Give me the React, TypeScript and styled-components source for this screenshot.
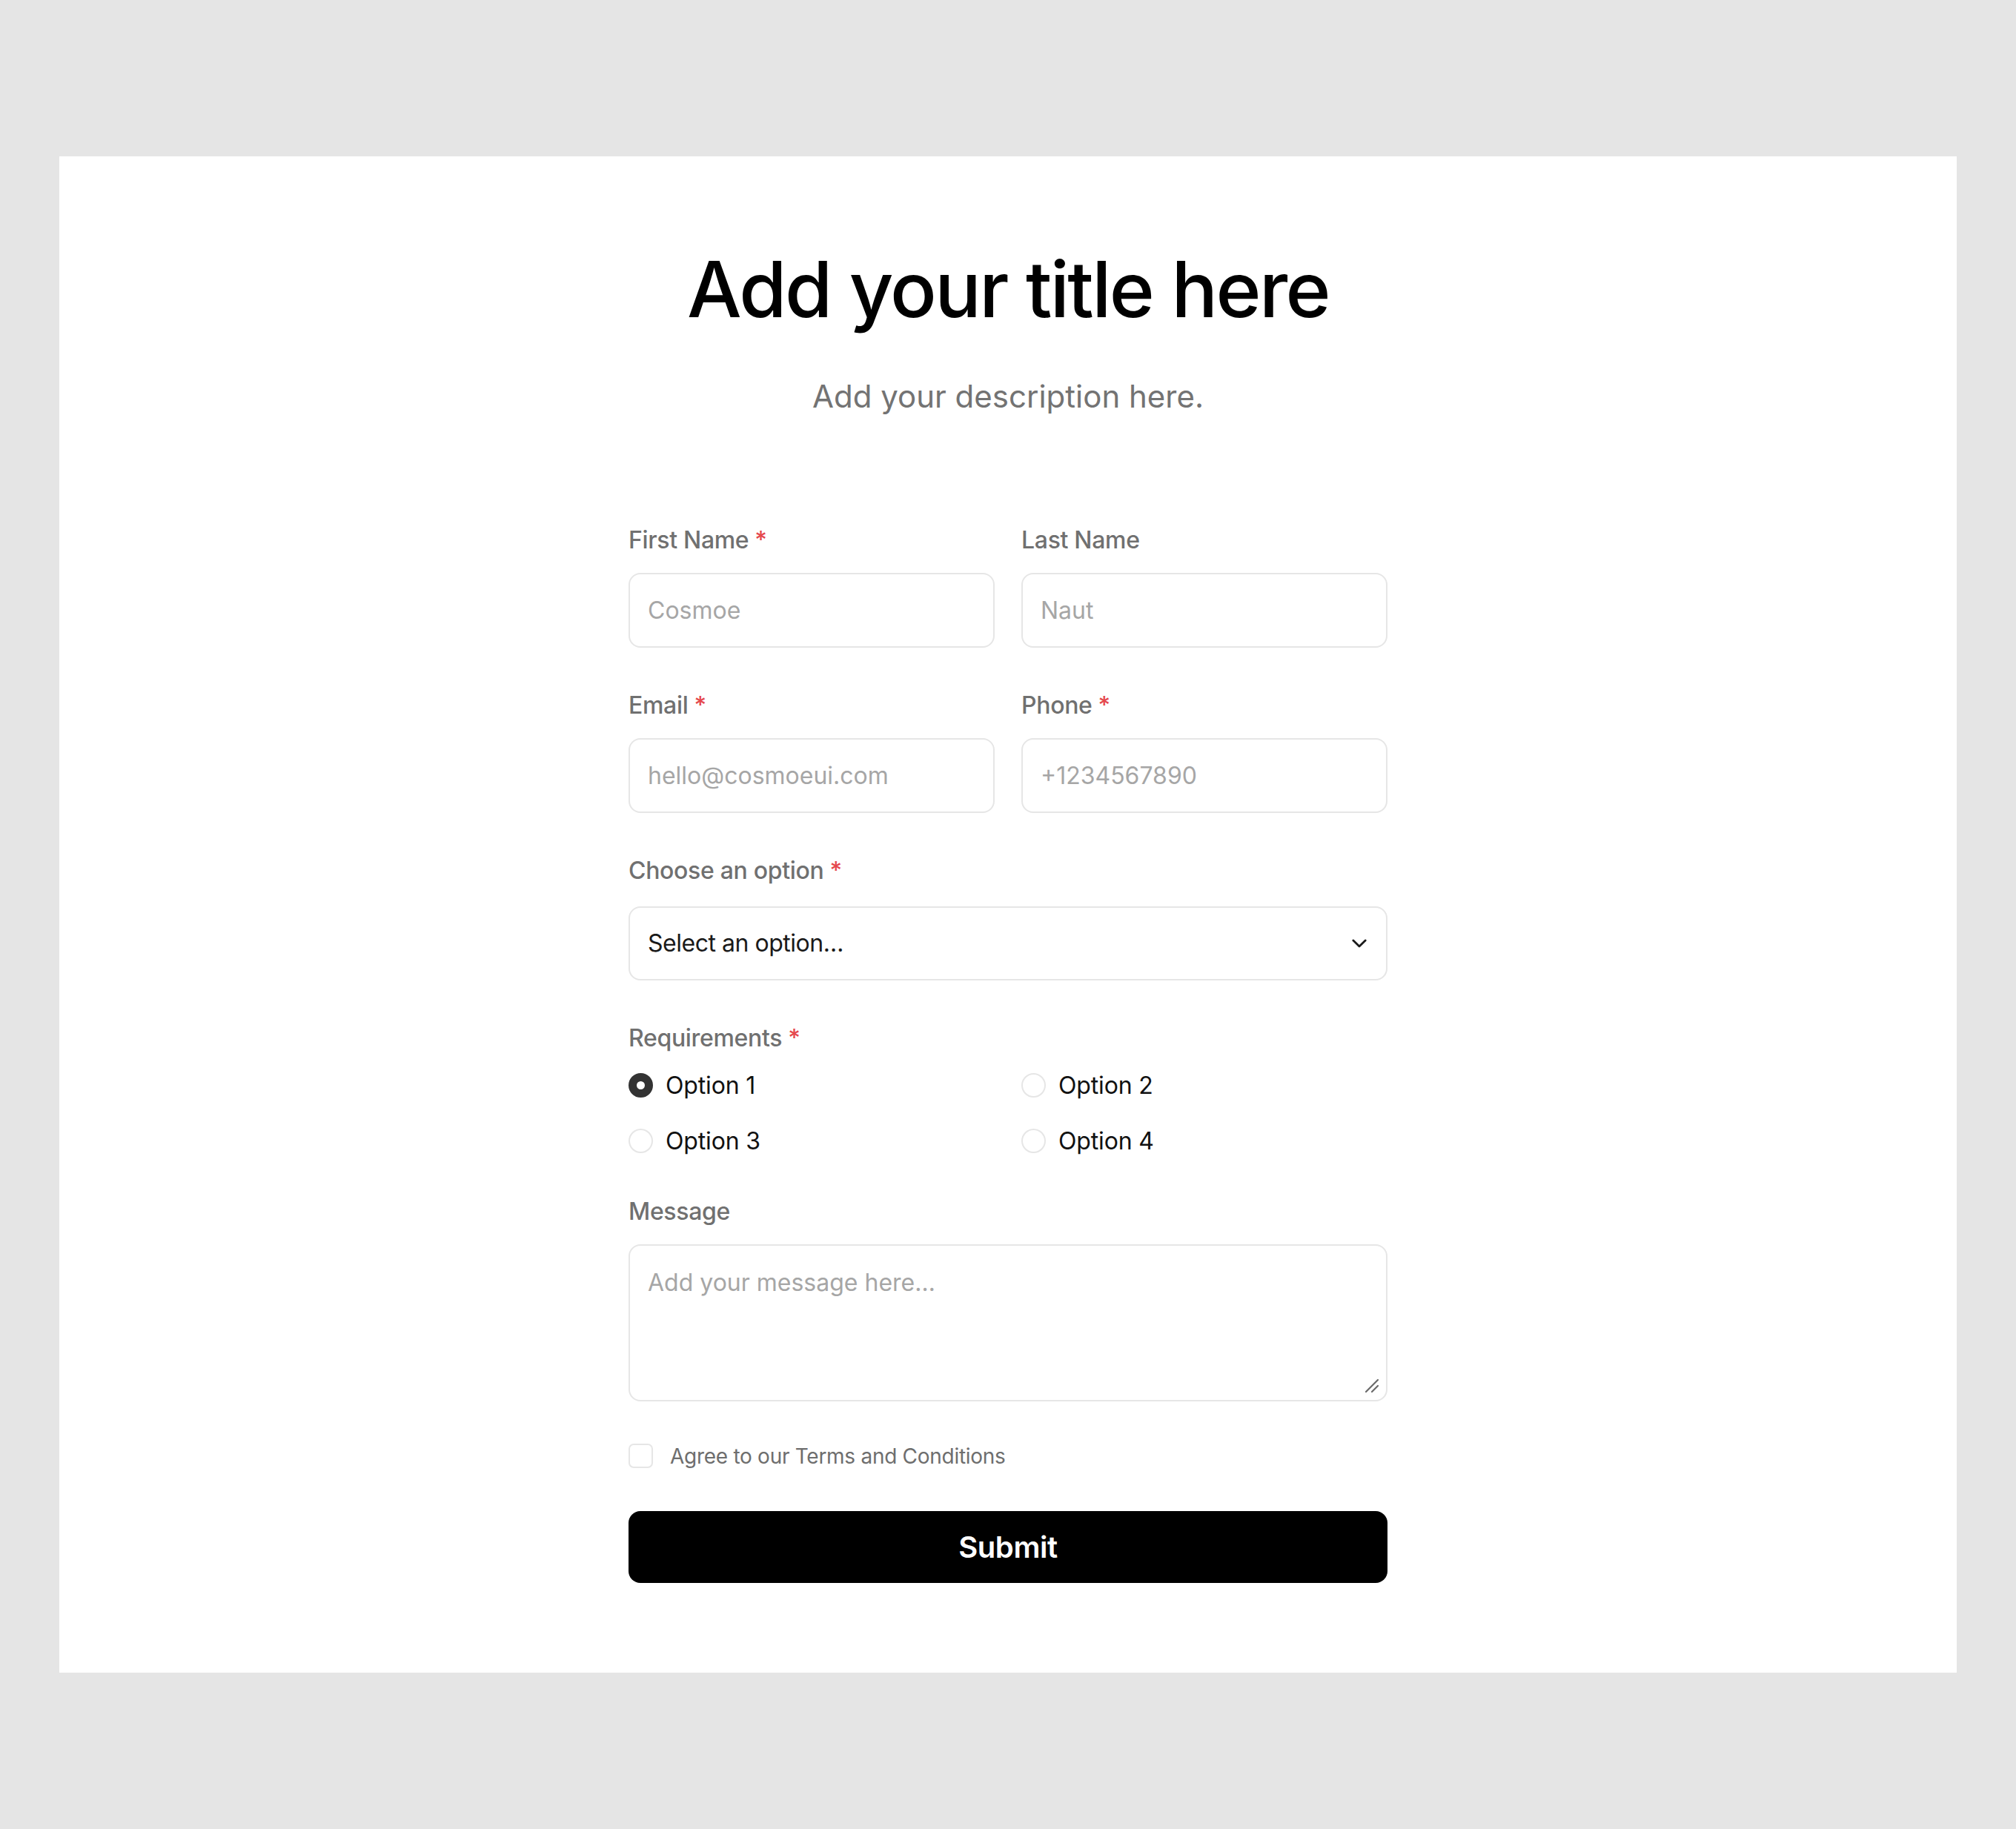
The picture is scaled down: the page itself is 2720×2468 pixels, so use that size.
import React from "react";
import styled, { createGlobalStyle } from "styled-components";

const GlobalStyle = createGlobalStyle`
  html, body {
    margin: 0;
    padding: 0;
    background: #e5e5e5;
  }
  body {
    font-family: Inter, "Noto Sans", "Liberation Sans", sans-serif;
    -webkit-font-smoothing: antialiased;
  }
  * { box-sizing: border-box; }
`;

const Page = styled.div`
  width: 2720px;
  min-height: 2468px;
  padding: 211px 80px 211px 80px;
  background: #e5e5e5;
`;

const Card = styled.main`
  background: #ffffff;
  width: 2560px;
  height: 2046px;
  padding: 117px 0 0;
  display: flex;
  flex-direction: column;
  align-items: center;
`;

const Title = styled.h1`
  margin: 0;
  font-size: 104px;
  line-height: 1.2;
  font-weight: 500;
  letter-spacing: -0.025em;
  color: #000;
  text-align: center;
`;

const Description = styled.p`
  margin: 52px 0 0;
  font-size: 42px;
  line-height: 60px;
  color: #737373;
  text-align: center;
`;

const Form = styled.form`
  width: 1024px;
  margin-top: 140px;
  display: flex;
  flex-direction: column;
  gap: 54px;
`;

const Row = styled.div`
  display: grid;
  grid-template-columns: 1fr 1fr;
  column-gap: 36px;
`;

const Field = styled.div<{ $gap?: number }>`
  display: flex;
  flex-direction: column;
  gap: ${(p) => p.$gap ?? 20}px;
`;

const Label = styled.label`
  font-size: 32px;
  line-height: 48px;
  font-weight: 500;
  color: #707070;
  letter-spacing: -0.01em;
`;

const Star = styled.span`
  color: #e5484d;
  margin-left: 8px;
`;

const TextInput = styled.input`
  height: 101px;
  width: 100%;
  border: 2px solid #e6e6e6;
  border-radius: 16px;
  padding: 0 24px;
  font-family: inherit;
  font-size: 32px;
  color: #111;
  outline: none;
  background: #fff;
  &::placeholder {
    color: #a6a6a6;
  }
`;

const SelectWrap = styled.div`
  position: relative;
`;

const Select = styled.select`
  appearance: none;
  -webkit-appearance: none;
  height: 100px;
  width: 100%;
  border: 2px solid #e6e6e6;
  border-radius: 16px;
  padding: 0 24px;
  font-family: inherit;
  font-size: 32px;
  letter-spacing: -0.015em;
  color: #1a1a1a;
  background: #fff;
  outline: none;
`;

const Chevron = styled.svg`
  position: absolute;
  right: 24px;
  top: 50%;
  transform: translateY(-50%);
  pointer-events: none;
`;

const RadioGrid = styled.div`
  display: grid;
  grid-template-columns: 1fr 1fr;
  column-gap: 36px;
  row-gap: 27px;
`;

const RadioItem = styled.label`
  display: flex;
  align-items: center;
  gap: 17px;
  height: 48px;
  font-size: 32px;
  color: #111;
  letter-spacing: -0.005em;
`;

const Radio = styled.input.attrs({ type: "radio" })`
  appearance: none;
  -webkit-appearance: none;
  margin: 0;
  width: 33px;
  height: 33px;
  border-radius: 50%;
  border: 2px solid #e6e6e6;
  background: #fff;
  flex-shrink: 0;
  &:checked {
    border: 11px solid #333;
    background: #fff;
  }
`;

const TextAreaWrap = styled.div`
  position: relative;
`;

const TextArea = styled.textarea`
  display: block;
  width: 100%;
  height: 212px;
  resize: none;
  border: 2px solid #e6e6e6;
  border-radius: 16px;
  padding: 26px 24px;
  font-family: inherit;
  font-size: 32px;
  line-height: 48px;
  color: #111;
  outline: none;
  &::placeholder {
    color: #a6a6a6;
  }
`;

const Resizer = styled.svg`
  position: absolute;
  right: 8px;
  bottom: 8px;
  pointer-events: none;
`;

const CheckRow = styled.label`
  display: flex;
  align-items: center;
  gap: 23px;
  height: 48px;
  font-size: 28px;
  color: #6e6e6e;
  letter-spacing: -0.01em;
`;

const Checkbox = styled.input.attrs({ type: "checkbox" })`
  appearance: none;
  -webkit-appearance: none;
  margin: 0;
  width: 33px;
  height: 33px;
  border: 2px solid #e6e6e6;
  border-radius: 7px;
  background: #fff;
  flex-shrink: 0;
`;

const SubmitButton = styled.button`
  height: 97px;
  width: 100%;
  border: none;
  border-radius: 16px;
  background: #000;
  color: #fff;
  font-family: inherit;
  font-size: 40px;
  font-weight: 600;
  letter-spacing: -0.01em;
  cursor: pointer;
`;

const Group = styled.div`
  display: flex;
  flex-direction: column;
  gap: 50px;
  margin-top: -7px;
`;

function Req() {
  return <Star>*</Star>;
}

export default function App() {
  return (
    <>
      <GlobalStyle />
      <Page>
        <Card>
          <Title>Add your title here</Title>
          <Description>Add your description here.</Description>
          <Form onSubmit={(e) => e.preventDefault()}>
            <Row>
              <Field>
                <Label>
                  First Name
                  <Req />
                </Label>
                <TextInput placeholder="Cosmoe" />
              </Field>
              <Field>
                <Label>Last Name</Label>
                <TextInput placeholder="Naut" />
              </Field>
            </Row>
            <Row>
              <Field>
                <Label>
                  Email
                  <Req />
                </Label>
                <TextInput placeholder="hello@cosmoeui.com" />
              </Field>
              <Field>
                <Label>
                  Phone
                  <Req />
                </Label>
                <TextInput placeholder="+1234567890" />
              </Field>
            </Row>
            <Field $gap={24}>
              <Label>
                Choose an option
                <Req />
              </Label>
              <SelectWrap>
                <Select defaultValue="">
                  <option value="">Select an option…</option>
                  <option value="a">Option A</option>
                  <option value="b">Option B</option>
                </Select>
                <Chevron width="28" height="28" viewBox="0 0 24 24" fill="none">
                  <path d="M5 8.5l7 7 7-7" stroke="#1a1a1a" strokeWidth="2.4" strokeLinecap="round" strokeLinejoin="round" />
                </Chevron>
              </SelectWrap>
            </Field>
            <Field $gap={16}>
              <Label>
                Requirements
                <Req />
              </Label>
              <RadioGrid>
                <RadioItem>
                  <Radio name="req" defaultChecked />
                  Option 1
                </RadioItem>
                <RadioItem>
                  <Radio name="req" />
                  Option 2
                </RadioItem>
                <RadioItem>
                  <Radio name="req" />
                  Option 3
                </RadioItem>
                <RadioItem>
                  <Radio name="req" />
                  Option 4
                </RadioItem>
              </RadioGrid>
            </Field>
            <Group>
              <Field>
                <Label>Message</Label>
                <TextAreaWrap>
                  <TextArea placeholder="Add your message here…" />
                  <Resizer width="28" height="28" viewBox="0 0 28 28" fill="none">
                    <path d="M23 7L7 23M23 15L15 23" stroke="#6a6a6a" strokeWidth="2.2" strokeLinecap="round" />
                  </Resizer>
                </TextAreaWrap>
              </Field>
              <CheckRow>
                <Checkbox />
                Agree to our Terms and Conditions
              </CheckRow>
              <SubmitButton type="submit">Submit</SubmitButton>
            </Group>
          </Form>
        </Card>
      </Page>
    </>
  );
}
